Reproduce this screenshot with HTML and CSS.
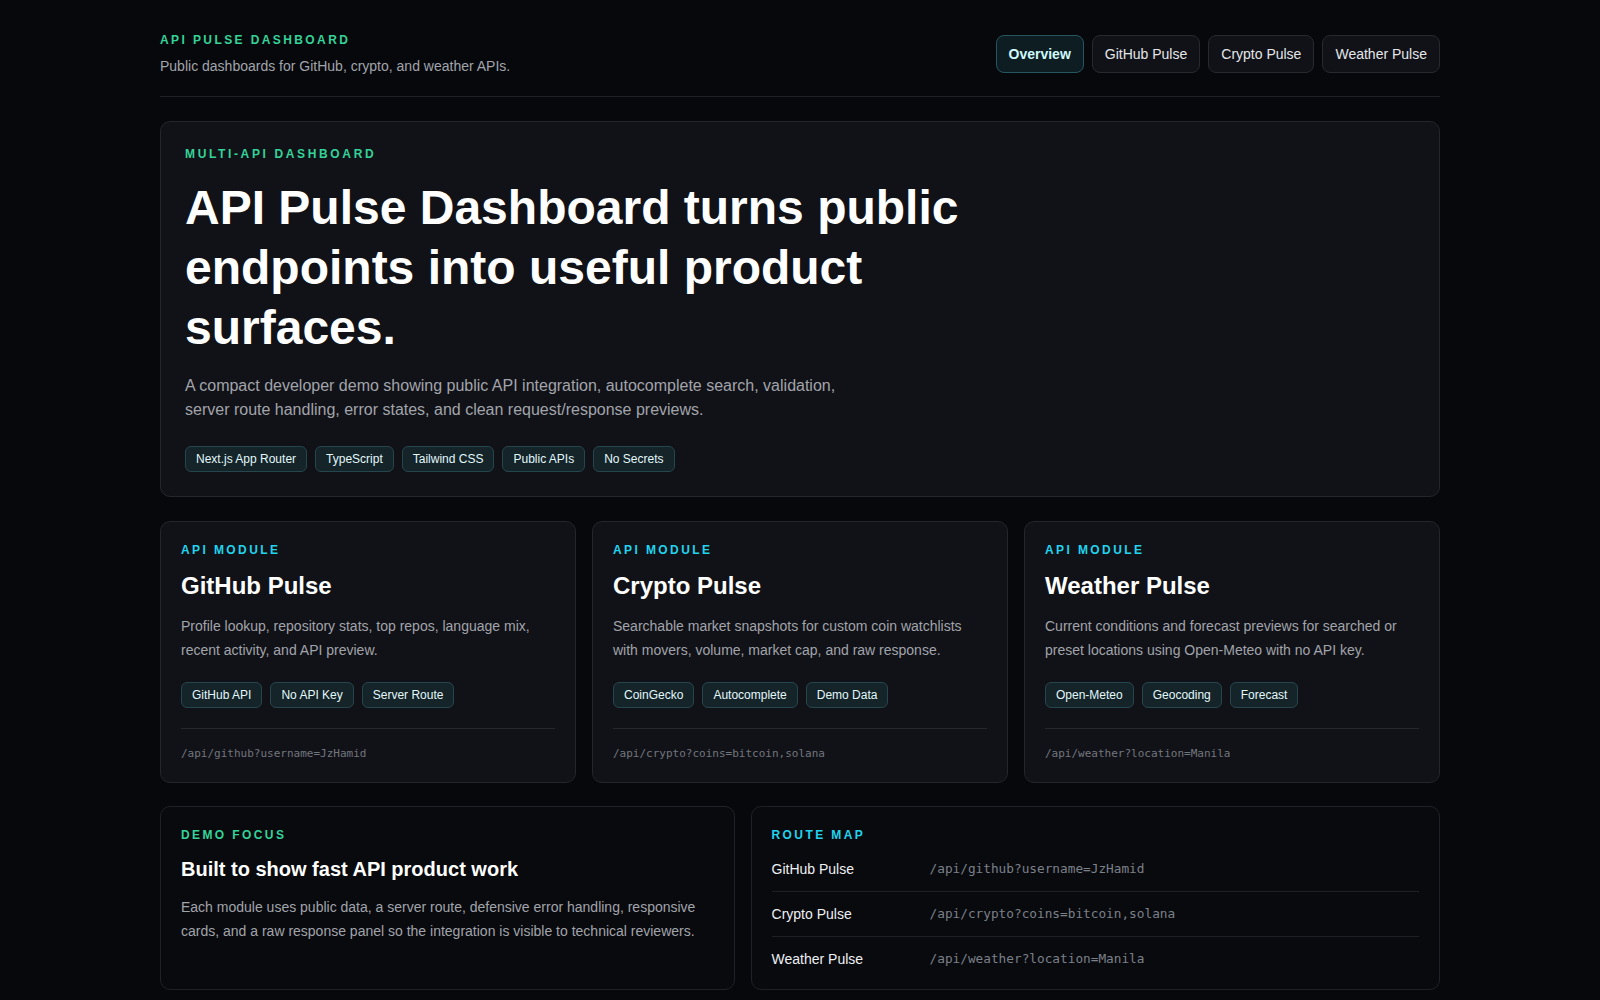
FILE: index.html
```html
<!DOCTYPE html>
<html lang="en">
<head>
  <meta charset="UTF-8" />
  <meta name="viewport" content="width=device-width, initial-scale=1.0"/>
  <title>API Pulse Dashboard</title>
  <link rel="stylesheet" href="styles.css">
</head>
<body>
  <div class="page">
    <header class="site-header">
      <div class="brand">
        <div class="eyebrow green">API Pulse Dashboard</div>
        <p class="brand-sub">Public dashboards for GitHub, crypto, and weather APIs.</p>
      </div>
      <nav class="nav">
        <a class="nav-btn active" href="#">Overview</a>
        <a class="nav-btn" href="#">GitHub Pulse</a>
        <a class="nav-btn" href="#">Crypto Pulse</a>
        <a class="nav-btn" href="#">Weather Pulse</a>
      </nav>
    </header>

    <section class="hero card">
      <div class="eyebrow green wide">Multi-API Dashboard</div>
      <h1>API Pulse Dashboard turns public endpoints into useful product surfaces.</h1>
      <p class="hero-text">A compact developer demo showing public API integration, autocomplete search, validation, server route handling, error states, and clean request/response previews.</p>
      <div class="tags hero-tags">
        <span class="tag">Next.js App Router</span>
        <span class="tag">TypeScript</span>
        <span class="tag">Tailwind CSS</span>
        <span class="tag">Public APIs</span>
        <span class="tag">No Secrets</span>
      </div>
    </section>

    <section class="modules">
      <article class="module card">
        <div class="eyebrow cyan">API Module</div>
        <h2>GitHub Pulse</h2>
        <p class="module-text">Profile lookup, repository stats, top repos, language mix, recent activity, and API preview.</p>
        <div class="tags">
          <span class="tag">GitHub API</span>
          <span class="tag">No API Key</span>
          <span class="tag">Server Route</span>
        </div>
        <div class="module-route">/api/github?username=JzHamid</div>
      </article>

      <article class="module card">
        <div class="eyebrow cyan">API Module</div>
        <h2>Crypto Pulse</h2>
        <p class="module-text">Searchable market snapshots for custom coin watchlists with movers, volume, market cap, and raw response.</p>
        <div class="tags">
          <span class="tag">CoinGecko</span>
          <span class="tag">Autocomplete</span>
          <span class="tag">Demo Data</span>
        </div>
        <div class="module-route">/api/crypto?coins=bitcoin,solana</div>
      </article>

      <article class="module card">
        <div class="eyebrow cyan">API Module</div>
        <h2>Weather Pulse</h2>
        <p class="module-text">Current conditions and forecast previews for searched or preset locations using Open-Meteo with no API key.</p>
        <div class="tags">
          <span class="tag">Open-Meteo</span>
          <span class="tag">Geocoding</span>
          <span class="tag">Forecast</span>
        </div>
        <div class="module-route">/api/weather?location=Manila</div>
      </article>
    </section>

    <section class="bottom">
      <article class="panel">
        <div class="eyebrow green">Demo Focus</div>
        <h3>Built to show fast API product work</h3>
        <p class="module-text">Each module uses public data, a server route, defensive error handling, responsive cards, and a raw response panel so the integration is visible to technical reviewers.</p>
      </article>

      <article class="panel">
        <div class="eyebrow cyan">Route Map</div>
        <div class="routes">
          <div class="route-row">
            <span class="route-name">GitHub Pulse</span>
            <code class="route-path">/api/github?username=JzHamid</code>
          </div>
          <div class="route-row">
            <span class="route-name">Crypto Pulse</span>
            <code class="route-path">/api/crypto?coins=bitcoin,solana</code>
          </div>
          <div class="route-row">
            <span class="route-name">Weather Pulse</span>
            <code class="route-path">/api/weather?location=Manila</code>
          </div>
        </div>
      </article>
    </section>
  </div>
</body>
</html>
```

FILE: styles.css
```css
body {
  margin: 0;
  background: #07080c;
  color: #fff;
  font-family: 'Liberation Sans', Arial, sans-serif;
}

.page {
  max-width: 1280px;
  margin: 0 auto;
  padding: 32px 0;
}

/* header */
.site-header {
  display: flex;
  justify-content: space-between;
  align-items: center;
  padding-bottom: 20px;
  border-bottom: 1px solid #1e2026;
}

.eyebrow {
  font-size: 12px;
  line-height: 16px;
  font-weight: bold;
  text-transform: uppercase;
  letter-spacing: 0.2em;
}

.eyebrow.wide {
  letter-spacing: 0.22em;
}

.green { color: #34d399; }
.cyan { color: #22d3ee; }

.brand-sub {
  margin: 8px 0 0;
  font-size: 14px;
  line-height: 20px;
  color: #a1a4ab;
}

.nav {
  display: flex;
  gap: 8px;
}

.nav-btn {
  display: block;
  padding: 8px 12px;
  font-size: 14px;
  line-height: 20px;
  color: #e4e6ea;
  text-decoration: none;
  background: #111217;
  border: 1px solid #27292f;
  border-radius: 8px;
}

.nav-btn.active {
  font-weight: bold;
  color: #cffafe;
  background: #0e1d22;
  border-color: #245560;
}

/* cards */
.card {
  background: #111217;
  border: 1px solid #24262c;
  border-radius: 10px;
}

.hero {
  margin-top: 24px;
  padding: 24px;
}

h1 {
  max-width: 840px;
  margin: 16px 0 0;
  font-size: 48px;
  line-height: 60px;
  font-weight: bold;
}

.hero-text {
  max-width: 672px;
  margin: 16px 0 0;
  font-size: 16px;
  line-height: 24px;
  color: #a1a4ab;
}

.tags {
  display: flex;
  flex-wrap: wrap;
  gap: 8px;
  margin-top: 20px;
}

.hero-tags {
  margin-top: 24px;
}

.tag {
  padding: 4px 10px;
  font-size: 12px;
  line-height: 16px;
  color: #e3f8fb;
  background: #142429;
  border: 1px solid #26464d;
  border-radius: 6px;
}

.modules {
  display: grid;
  grid-template-columns: repeat(3, 1fr);
  gap: 16px;
  margin-top: 24px;
}

.module {
  padding: 20px;
}

h2 {
  margin: 12px 0 0;
  font-size: 24px;
  line-height: 32px;
  font-weight: bold;
}

.module-text {
  margin: 12px 0 0;
  font-size: 14px;
  line-height: 24px;
  color: #a1a4ab;
}

.module-route {
  margin-top: 20px;
  padding-top: 17px;
  border-top: 1px solid #25272d;
  font-family: 'DejaVu Sans Mono', monospace;
  font-size: 11px;
  line-height: 16px;
  color: #72767e;
}

/* bottom row */
.bottom {
  display: grid;
  grid-template-columns: 5fr 6fr;
  gap: 16px;
  margin-top: 23px;
}

.panel {
  padding: 20px;
  background: #090a0e;
  border: 1px solid #1f2127;
  border-radius: 10px;
}

h3 {
  margin: 12px 0 0;
  font-size: 20px;
  line-height: 28px;
  font-weight: bold;
}

.routes {
  margin-top: 16px;
}

.route-row {
  display: grid;
  grid-template-columns: 158px 1fr;
  align-items: center;
  padding: 12px 0;
  border-bottom: 1px solid #1e2026;
}

.route-row:first-child {
  padding-top: 0;
}

.route-row:last-child {
  padding-bottom: 0;
  border-bottom: none;
}

.route-name {
  font-size: 14px;
  line-height: 20px;
  color: #eef0f3;
}

.route-path {
  font-family: 'DejaVu Sans Mono', monospace;
  font-size: 12.75px;
  line-height: 20px;
  color: #7b8089;
}
```
